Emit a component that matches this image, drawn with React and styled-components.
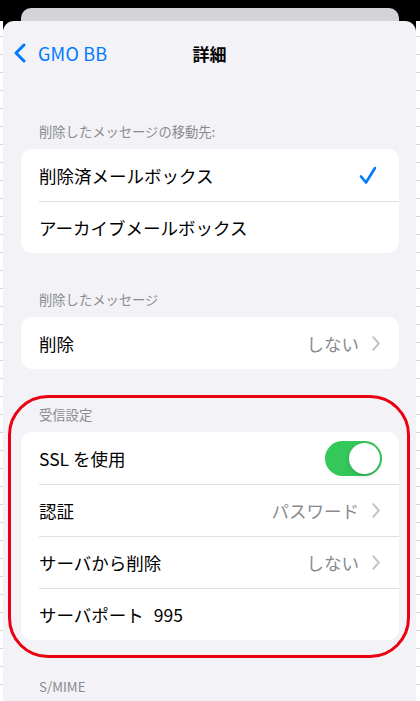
import React from "react";
import styled, { createGlobalStyle } from "styled-components";

const Global = createGlobalStyle`
  html, body { margin: 0; padding: 0; background: #000; }
  body { font-family: "Noto Sans CJK JP", "Noto Sans", sans-serif; -webkit-font-smoothing: antialiased; }
`;

const Screen = styled.div`
  width: 420px;
  height: 701px;
  overflow: hidden;
  background: #000;
  display: flex;
  flex-direction: column;
`;

const BackCard = styled.div`
  margin: 8px 21px 0 21px;
  height: 13px;
  flex: none;
  background: #d3d3d8;
  border-radius: 10px 10px 0 0;
`;

const Body = styled.div`
  flex: 1;
  display: flex;
  min-height: 0;
`;

const Strip = styled.div`
  width: ${(p) => p.$w}px;
  flex: none;
  background: repeating-linear-gradient(
    to bottom,
    #fff 0 15px,
    #d6d6d6 15px 16px,
    #fff 16px 18px
  );
`;

const Sheet = styled.div`
  flex: 1;
  background: #f2f2f7;
  border-radius: 11px 11px 0 0;
  padding-top: 10px;
  display: flex;
  flex-direction: column;
  overflow: hidden;
`;

const Nav = styled.div`
  flex: none;
  height: 44px;
  display: grid;
  grid-template-columns: 1fr auto 1fr;
  align-items: center;
`;

const Back = styled.div`
  display: flex;
  align-items: center;
  gap: 12px;
  padding-left: 10px;
  color: #007aff;
  font-size: 18px;
  letter-spacing: 0.2px;
`;

const Title = styled.div`
  font-size: 17px;
  font-weight: 700;
  color: #000;
`;

const Content = styled.div`
  flex: none;
  padding: 0 17px 0 18px;
  display: flex;
  flex-direction: column;
`;

const Section = styled.div`
  flex: none;
  position: relative;
  margin-top: ${(p) => p.$top}px;
`;

const Header = styled.div`
  padding: 0 18px 8px;
  font-size: 13.3px;
  line-height: 18px;
  color: #8a8a8e;
`;

const Card = styled.div`
  background: #fff;
  border-radius: 11px;
  overflow: hidden;
`;

const Row = styled.div`
  height: 52px;
  display: flex;
  align-items: center;
  margin-left: 18px;
  padding-right: ${(p) => p.$pr ?? 19}px;
  box-sizing: border-box;
  border-top: ${(p) => (p.$first ? "none" : "1px solid #e0e0e4")};
  font-size: 17.5px;
  color: #000;
`;

const Label = styled.div`
  flex: 1;
  white-space: nowrap;
`;

const Port = styled.span`
  margin-left: 10px;
`;

const Value = styled.div`
  color: #8a8a8e;
  display: flex;
  align-items: center;
  gap: 13px;
`;

const Toggle = styled.div`
  width: 57px;
  height: 35px;
  border-radius: 18px;
  background: #34c759;
  position: relative;
  flex: none;
`;

const Knob = styled.div`
  position: absolute;
  top: 2px;
  right: 2px;
  width: 31px;
  height: 31px;
  border-radius: 50%;
  background: #fff;
  box-shadow: 0 2px 5px rgba(0, 0, 0, 0.15), 0 0 1px rgba(0, 0, 0, 0.1);
`;

const Highlight = styled.div`
  position: absolute;
  left: -13px;
  right: -11px;
  top: -11px;
  bottom: -18px;
  border: 3.5px solid #ea0010;
  border-radius: 40px;
  pointer-events: none;
`;

const BackChevron = () => (
  <svg width="13" height="20" viewBox="0 0 13 20" fill="none">
    <path d="M11 2 L3 10 L11 18" stroke="#007aff" strokeWidth="3" strokeLinecap="round" strokeLinejoin="round" />
  </svg>
);

const Chevron = () => (
  <svg width="8" height="15" viewBox="0 0 8 15" fill="none">
    <path d="M1.2 1.2 L6.8 7.5 L1.2 13.8" stroke="#c4c4c8" strokeWidth="2" strokeLinecap="round" strokeLinejoin="round" />
  </svg>
);

const Check = () => (
  <svg width="18" height="19" viewBox="0 0 18 19" fill="none">
    <path d="M2 10.5 L7 16.5 L16 2" stroke="#007aff" strokeWidth="2.6" strokeLinecap="round" strokeLinejoin="round" />
  </svg>
);

export default function App() {
  return (
    <>
      <Global />
      <Screen>
        <BackCard />
        <Body>
          <Strip $w={3} />
          <Sheet>
            <Nav>
              <Back>
                <BackChevron />
                <span>GMO BB</span>
              </Back>
              <Title>詳細</Title>
              <div />
            </Nav>
            <Content>
              <Section $top={48}>
                <Header>削除したメッセージの移動先:</Header>
                <Card>
                  <Row $first $pr={22}>
                    <Label>削除済メールボックス</Label>
                    <Check />
                  </Row>
                  <Row>
                    <Label>アーカイブメールボックス</Label>
                  </Row>
                </Card>
              </Section>
              <Section $top={38}>
                <Header>削除したメッセージ</Header>
                <Card>
                  <Row $first>
                    <Label>削除</Label>
                    <Value>
                      しない
                      <Chevron />
                    </Value>
                  </Row>
                </Card>
              </Section>
              <Section $top={37}>
                <Header>受信設定</Header>
                <Card>
                  <Row $first $pr={17}>
                    <Label>SSL を使用</Label>
                    <Toggle>
                      <Knob />
                    </Toggle>
                  </Row>
                  <Row>
                    <Label>認証</Label>
                    <Value>
                      パスワード
                      <Chevron />
                    </Value>
                  </Row>
                  <Row>
                    <Label>サーバから削除</Label>
                    <Value>
                      しない
                      <Chevron />
                    </Value>
                  </Row>
                  <Row>
                    <Label>
                      サーバポート<Port>995</Port>
                    </Label>
                  </Row>
                </Card>
                <Highlight />
              </Section>
              <Section $top={38}>
                <Header>S/MIME</Header>
              </Section>
            </Content>
          </Sheet>
          <Strip $w={4} />
        </Body>
      </Screen>
    </>
  );
}
